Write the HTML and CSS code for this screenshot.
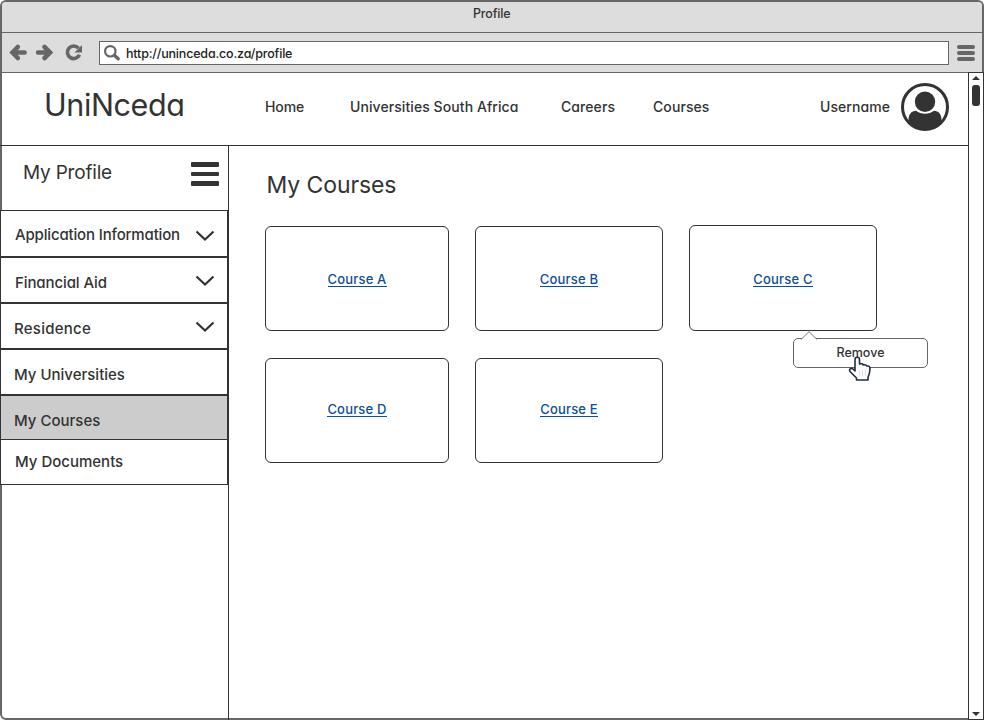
FILE: index.html
```html
<!DOCTYPE html>
<html lang="en">
<head>
<meta charset="utf-8">
<title>Profile</title>
<link rel="stylesheet" href="styles.css">
</head>
<body>
<div class="window">
  <div class="titlebar"><span class="t-title">Profile</span></div>
  <div class="toolbar">
    <svg class="nav-icons" width="81" height="38" viewBox="0 0 81 38">
      <g fill="none" stroke="#666" stroke-width="4.400" stroke-linecap="round">
        <path d="M12 19.500H22.700M45 19.500H36"/>
        <path d="M15.800 14L10.500 19.500L15.800 25M42.500 14L48 19.500L42.500 25" stroke-width="4.600" stroke-linejoin="miter"/>
        <path d="M76.500 15.200A6.300 6.300 0 1 0 77.500 21.800" stroke-width="3.600" stroke-linecap="butt"/>
      </g>
      <path d="M80 12V19.500H72.500Z" fill="#666"/>
    </svg>
    <div class="address">
      <svg width="18" height="18" viewBox="0 0 18 18"><g fill="none" stroke="#666"><circle cx="6.300" cy="6.300" r="5.200" stroke-width="2.200"/><path d="M10.300 10.300L14.200 13.800" stroke-width="3.400" stroke-linecap="round"/></g></svg>
      <span class="t-url">http://uninceda.co.za/profile</span>
    </div>
    <div class="menu"><i></i><i></i><i></i></div>
  </div>
  <div class="viewport">
    <div class="page">
      <header class="header">
        <span class="t-logo">UniNceda</span>
        <nav class="nav">
          <span class="t-home">Home</span>
          <span class="t-usa">Universities South Africa</span>
          <span class="t-careers">Careers</span>
          <span class="t-courses">Courses</span>
        </nav>
        <span class="t-user">Username</span>
        <svg class="avatar" width="48" height="48" viewBox="0 0 48 48">
          <circle cx="24" cy="24" r="22.500" fill="#fff" stroke="#333" stroke-width="3"/>
          <circle cx="24" cy="18.700" r="10.200" fill="#333"/>
          <path d="M7.500 36C8 31 10.500 28 15 27.800C20 31.800 28 31.800 33 27.800C37.500 28 40 31 40.500 36L40 40A22.700 22.700 0 0 1 8 40Z" fill="#333"/>
        </svg>
      </header>
      <div class="body">
        <aside class="sidebar">
          <div class="profile"><span class="t-profile">My Profile</span><div class="burger"><i></i><i></i><i></i></div></div>
          <div class="item i1"><span class="t-app">Application Information</span><svg width="20" height="12" viewBox="0 0 20 12"><path d="M1.500 1.500L10 9.500L18.500 1.500"/></svg></div>
          <div class="item i2"><span class="t-fin">Financial Aid</span><svg width="20" height="12" viewBox="0 0 20 12"><path d="M1.500 1.500L10 9.500L18.500 1.500"/></svg></div>
          <div class="item i3"><span class="t-res">Residence</span><svg width="20" height="12" viewBox="0 0 20 12"><path d="M1.500 1.500L10 9.500L18.500 1.500"/></svg></div>
          <div class="item i4"><span class="t-uni">My Universities</span></div>
          <div class="item i5"><span class="t-cou">My Courses</span></div>
          <div class="item i6"><span class="t-doc">My Documents</span></div>
        </aside>
        <main class="main">
          <h1><span class="t-h1">My Courses</span></h1>
          <div class="grid">
            <div class="card"><a>Course A</a></div>
            <div class="card"><a>Course B</a></div>
            <div class="card tall"><a>Course C</a>
              <div class="tip">
                <svg class="tip-arrow" width="18" height="9" viewBox="0 0 18 9"><path d="M1 8.500L9 .700L17 8.500" fill="#fff" stroke="#777"/></svg>
                <span class="t-rem">Remove</span>
                <svg class="hand" width="24" height="26" viewBox="0 0 24 26"><path d="M7 15V3.500C7 .500 11.500 .500 11.500 3.500V8C13.500 7.300 15 8 15.200 9C17 8.400 18.500 9 18.800 10C20.800 9.700 22 10.500 22 12.500C22 16.500 21 19 20 21.500V24H8.500V22L2 15.500C.500 13 3.500 11.500 5 13Z" fill="#fff" stroke="#222b3a" stroke-width="1.600" stroke-linejoin="round"/><path d="M11.500 14V20M14.500 14V20M17.500 14V20" stroke="#e4e0ea" fill="none"/></svg>
              </div>
            </div>
            <div class="card low"><a>Course D</a></div>
            <div class="card low"><a>Course E</a></div>
          </div>
        </main>
      </div>
    </div>
    <div class="scrollbar"><b class="up"></b><b class="thumb"></b><b class="down"></b></div>
  </div>
</div>
</body>
</html>
```
FILE: styles.css
```css
* { box-sizing: border-box; }
body { margin: 0; font-family: Inter, "Liberation Sans", sans-serif; font-feature-settings: "cv11" 1; font-weight: 450; color: #333; }
span, a { white-space: nowrap; }
.window { width: 984px; height: 720px; border: 2px solid #666; border-radius: 6px; background: #fff; display: flex; flex-direction: column; }
.titlebar { height: 31px; background: #ddd; border-bottom: 1px solid #666; border-radius: 4px 4px 0 0; padding-left: 471px; font-size: 12.5px; line-height: 23px; }
.t-title { letter-spacing: -.15px; }
.toolbar { height: 39px; background: #ddd; display: flex; align-items: flex-start; }
.nav-icons { margin-right: 16px; }
.address { width: 850px; height: 24px; margin-top: 8px; border: 1px solid #666; background: #fff; display: flex; padding-left: 4px; font-size: 12.5px; line-height: 23px; }
.address svg { margin: 3px 4px 0 0; }
.t-url { letter-spacing: -.18px; color: #222; }
.menu { margin: 12px 0 0 8px; display: flex; flex-direction: column; gap: 2px; }
.menu i { width: 18px; height: 4px; border-radius: 2px; background: #666; }
.viewport { flex: 1; min-height: 0; display: flex; margin: 0 -2px -2px; }
.page { width: 968px; border-top: 1px solid #666; display: flex; flex-direction: column; }
.header { height: 73px; border-bottom: 1px solid #333; display: flex; font-size: 14px; line-height: 67px; letter-spacing: .08px; }
.t-logo { font-size: 30.5px; line-height: 64px; font-weight: 430; letter-spacing: -.4px; margin-left: 44px; width: 221px; }
.nav { display: flex; width: 555px; }
.t-home { width: 85px; letter-spacing: -.1px; }
.t-usa { width: 211px; }
.t-careers { width: 92px; }
.t-user { width: 81px; }
.avatar { margin-top: 10px; }
.body { flex: 1; display: flex; }
.sidebar { width: 229px; border-right: 1px solid #333; font-size: 15px; }
.profile { height: 64px; display: flex; justify-content: space-between; padding: 0 9px 0 23px; font-size: 19px; line-height: 53px; }
.t-profile { font-weight: 420; letter-spacing: -.2px; }
.burger { display: flex; flex-direction: column; gap: 5px; margin-top: 16px; }
.burger i { width: 28px; height: 4.500px; border-radius: 1px; background: #333; }
.item { width: 228px; height: 46px; border: 1px solid #333; background: #fff; display: flex; justify-content: space-between; padding: 0 12px 0 13px; line-height: 50px; }
.item svg { margin-top: 17px; fill: none; stroke: #333; stroke-width: 2.200; }
.i1 { height: 47px; padding-left: 14px; line-height: 47px; }
.i1 svg { margin-top: 19px; }
.t-app { letter-spacing: -.16px; }
.t-fin { letter-spacing: -.1px; }
.t-res { letter-spacing: .25px; }
.i2 { padding-left: 14px; }
.i5 { height: 45px; background: #ccc; }
.i6 { height: 45px; border-top: 0; padding-left: 14px; line-height: 43px; }
.main { padding: 24px 0 0 36px; }
h1 { margin: 0; font-size: 23px; font-weight: 420; letter-spacing: -.1px; line-height: 31px; height: 55px; padding-left: 1.500px; }
.grid { display: grid; grid-template-columns: 184px 188px 188px; grid-template-rows: 106px 105px; gap: 27px 26px; align-items: end; }
.card { position: relative; height: 105px; border: 1px solid #333; border-radius: 6px; display: flex; justify-content: center; align-items: flex-start; padding-top: 44px; font-size: 13px; line-height: 16px; letter-spacing: .18px; }
.card.tall { height: 106px; padding-top: 45px; }
.card.low { padding-top: 42px; }
.card a { color: #0b4f95; border-bottom: 1px solid #0b4f95; height: 16px; }
.tip { position: absolute; left: 103px; top: 112px; width: 135px; height: 30px; border: 1px solid #666; border-radius: 5px; background: #fff; text-align: center; font-size: 12.5px; line-height: 28px; letter-spacing: 0; }
.tip-arrow { position: absolute; left: 6px; top: -8px; }
.hand { position: absolute; left: 54px; top: 17px; }
.scrollbar { width: 16px; border: 1px solid #333; background: #fff; display: flex; flex-direction: column; align-items: center; }
.up { border: 4px solid transparent; border-top: 0; border-bottom: 4px solid #333; margin: 3px 0 5px; }
.thumb { width: 8px; height: 21px; border-radius: 3px; background: #333; }
.down { border: 4px solid transparent; border-bottom: 0; border-top: 4px solid #333; margin: auto 0 3px; }
```
